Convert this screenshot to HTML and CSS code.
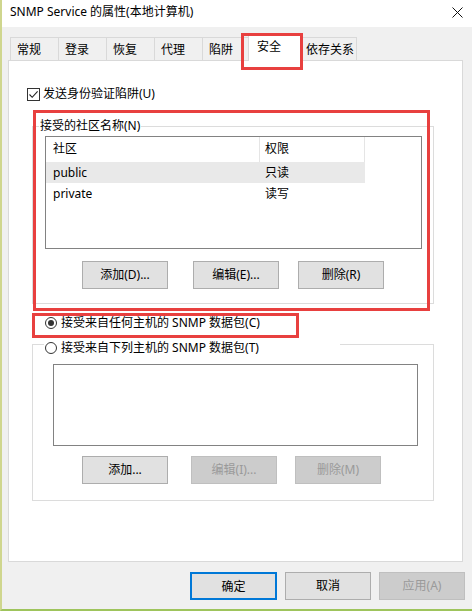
FILE: index.html
```html
<!DOCTYPE html>
<html lang="zh-CN">
<head>
<meta charset="utf-8">
<title>SNMP Service 的属性(本地计算机)</title>
<link rel="stylesheet" href="styles.css">
</head>
<body>
<div class="window">
  <div class="titlebar">
    <span class="title">SNMP Service 的属性(本地计算机)</span>
    <svg class="close" width="11" height="11" viewBox="0 0 11 11"><path d="M0.5 0.5 L10.5 10.5 M10.5 0.5 L0.5 10.5" stroke="#111" stroke-width="1" fill="none"/></svg>
  </div>
  <div class="tabs">
    <div class="tab">常规</div>
    <div class="tab">登录</div>
    <div class="tab">恢复</div>
    <div class="tab">代理</div>
    <div class="tab">陷阱</div>
    <div class="tab tab-active">安全</div>
    <div class="tab tab-wide">依存关系</div>
  </div>
  <div class="panel">
    <label class="chk-row">
      <span class="checkbox"><svg width="11" height="11" viewBox="0 0 11 11"><path d="M1.5 5.5 L4.2 8.3 L9.6 2.4" stroke="#222" stroke-width="1.1" fill="none"/></svg></span>
      <span>发送身份验证陷阱(U)</span>
    </label>
    <fieldset class="group group1">
      <legend class="legend1">接受的社区名称(N)</legend>
      <div class="listview">
        <div class="lv-head">
          <div class="col c1">社区</div>
          <div class="col c2">权限</div>
        </div>
        <div class="lv-row selected">
          <div class="col c1">public</div>
          <div class="col c2">只读</div>
        </div>
        <div class="lv-row">
          <div class="col c1">private</div>
          <div class="col c2">读写</div>
        </div>
      </div>
      <div class="btn-row row1">
        <button class="btn">添加(D)...</button>
        <button class="btn b-edit1">编辑(E)...</button>
        <button class="btn b-del1">删除(R)</button>
      </div>
    </fieldset>
    <label class="radio-row">
      <span class="radio checked"></span>
      <span>接受来自任何主机的 SNMP 数据包(C)</span>
    </label>
    <fieldset class="group group2">
      <legend class="legend2">
        <span class="radio"></span>
        <span>接受来自下列主机的 SNMP 数据包(T)</span>
      </legend>
      <div class="listbox"></div>
      <div class="btn-row row2">
        <button class="btn">添加...</button>
        <button class="btn disabled b-edit2">编辑(I)...</button>
        <button class="btn disabled b-del2">删除(M)</button>
      </div>
    </fieldset>
  </div>
  <div class="footer">
    <button class="btn default">确定</button>
    <button class="btn">取消</button>
    <button class="btn disabled">应用(A)</button>
  </div>
  <div class="mark mark-tab"></div>
  <div class="mark mark-group"></div>
  <div class="mark mark-radio"></div>
</div>
</body>
</html>
```
FILE: styles.css
```css
* { box-sizing: border-box; }
html, body { margin: 0; padding: 0; }
body {
  font-family: "Noto Sans", "Noto Sans CJK SC", sans-serif;
  font-size: 12px;
  color: #000;
  background: #f0f0f0;
}
.window {
  position: relative;
  width: 472px;
  height: 611px;
  background: #f0f0f0;
  border-left: 2px solid #cfd68e;
  border-bottom: 2px solid #9ec45c;
  overflow: hidden;
}
.titlebar {
  height: 27px;
  background: #fff;
  display: flex;
  align-items: center;
  justify-content: space-between;
  padding: 0 9px 3px 8px;
}
.title { line-height: 16px; }
.close { display: block; }

.tabs {
  height: 33px;
  display: flex;
  align-items: flex-end;
  padding-left: 8px;
}
.tab {
  width: 49px;
  height: 23px;
  margin-right: -1px;
  border: 1px solid #d9d9d9;
  border-bottom: 0;
  background: #f0f0f0;
  padding: 4px 0 0 6px;
  line-height: 16px;
}
.tab-active {
  position: relative;
  z-index: 2;
  width: 53px;
  height: 26px;
  margin-left: -2px;
  margin-right: -3px;
  margin-bottom: -1px;
  background: #fff;
  padding: 3px 0 0 8px;
}
.tab-wide {
  width: 59px;
  padding-left: 7px;
}

.panel {
  position: relative;
  z-index: 1;
  margin-left: 6px;
  width: 455px;
  height: 502px;
  border: 1px solid #d9d9d9;
  background: #fff;
}

.chk-row {
  display: flex;
  align-items: center;
  gap: 3px;
  height: 16px;
  line-height: 16px;
  margin: 25px 0 0 18px;
}
.checkbox {
  width: 13px;
  height: 13px;
  border: 1px solid #333;
  background: #fff;
  display: flex;
  align-items: center;
  justify-content: center;
}
.checkbox svg { display: block; }

.group {
  margin: 0 0 0 23px;
  width: 402px;
  border: 1px solid #dcdcdc;
  padding: 0;
  min-width: 0;
}
.group1 { margin-top: 17px; padding-bottom: 14px; }
.legend1 {
  margin-left: 6px;
  padding: 0 1px;
  line-height: 14px;
  height: 14px;
}
.listview {
  margin: 3px 0 0 12px;
  width: 377px;
  height: 113px;
  border: 1px solid #828282;
  background: #fff;
}
.lv-head {
  display: flex;
  height: 25px;
  line-height: 24px;
}
.lv-head .col { border-right: 1px solid #e5e5e5; }
.lv-row {
  display: flex;
  width: 319px;
  height: 21px;
  line-height: 21px;
}
.lv-row.selected { background: #e9e9e9; }
.col.c1 { width: 214px; padding-left: 7px; }
.col.c2 { width: 105px; padding-left: 5px; }

.btn-row { display: flex; }
.row1 { margin: 12px 0 0 49px; }
.row2 { margin: 10px 0 0 49px; }
.btn {
  font: inherit;
  color: #000;
  width: 86px;
  height: 28px;
  margin: 0;
  padding: 0;
  background: #e1e1e1;
  border: 1px solid #adadad;
  line-height: 26px;
  text-align: center;
}
.btn.disabled {
  background: #cccccc;
  border-color: #bfbfbf;
  color: #9a9a9a;
}
.btn.default { border: 2px solid #0078d7; width: 87px; }
.b-edit1 { margin-left: 25px; }
.b-del1 { margin-left: 19px; }
.b-edit2 { margin-left: 23px; }
.b-del2 { margin-left: 18px; }

.radio-row {
  display: flex;
  align-items: center;
  gap: 4px;
  height: 16px;
  line-height: 16px;
  margin: 11px 0 0 36px;
}
.radio {
  width: 12px;
  height: 12px;
  border: 1px solid #333;
  border-radius: 50%;
  background: #fff;
  display: flex;
  align-items: center;
  justify-content: center;
  flex: none;
}
.radio.checked::after {
  content: "";
  width: 6px;
  height: 6px;
  border-radius: 50%;
  background: #333;
}

.group2 { margin-top: 9px; padding-bottom: 16px; }
.legend2 {
  margin-left: 11px;
  padding: 0 0 0 1px;
  width: 296px;
  height: 8px;
  line-height: 16px;
  display: flex;
  align-items: flex-start;
  gap: 4px;
}
.legend2 .radio { margin-top: 2px; }
.listbox {
  margin: 16px 0 0 20px;
  width: 365px;
  height: 82px;
  border: 1px solid #828282;
  background: #fff;
}

.footer {
  display: flex;
  justify-content: flex-end;
  gap: 8px;
  margin-top: 10px;
  padding-right: 7px;
}

.mark {
  position: absolute;
  z-index: 5;
  border: 3px solid #e8403f;
  pointer-events: none;
}
.mark-tab { left: 239px; top: 33px; width: 62px; height: 37px; }
.mark-group { left: 31px; top: 110px; width: 397px; height: 201px; }
.mark-radio { left: 30px; top: 313px; width: 267px; height: 25px; }
```
